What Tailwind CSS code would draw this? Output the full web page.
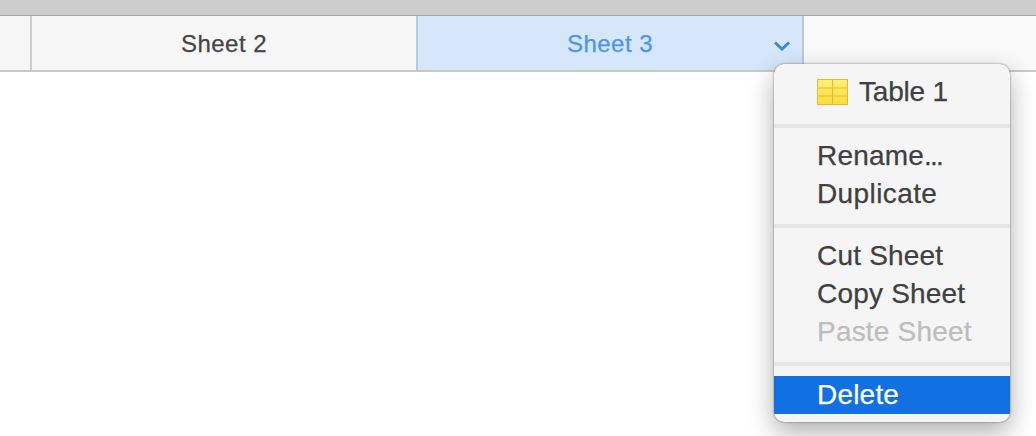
<!DOCTYPE html>
<html lang="en">
<head>
    <meta charset="UTF-8">
    <title>Sheet Menu</title>
    <script src="https://cdn.jsdelivr.net/npm/@tailwindcss/browser@4"></script>
</head>
<body class="bg-white overflow-hidden font-['Liberation_Sans',sans-serif] [-webkit-text-stroke:0.25px]">
    <div class="relative w-[1036px] h-[436px] overflow-hidden">
        <!-- window title strip -->
        <div class="h-[16px] bg-[#cecdcd] border-b border-[#a8a8a8]"></div>

        <!-- sheet tabs -->
        <div class="flex h-[56px] bg-[#f9f9f9] border-b-2 border-[#c9c9c9]">
            <div class="w-[32px] bg-[#f6f6f6] border-r-2 border-[#cdcdcd]"></div>
            <div class="w-[386px] pt-[2px] flex items-center justify-center bg-[#f6f6f6] border-r-2 border-[#b9c9de] text-[24px] tracking-[0.5px] text-[#444444]">Sheet 2</div>
            <div class="relative w-[386px] pt-[2px] flex items-center justify-center bg-[#d6e7fb] border-r-2 border-[#b9c9de] text-[24px] tracking-[0.5px] text-[#4a96ee]">
                Sheet 3
                <svg class="absolute left-[355px] top-[24px]" width="18" height="11" viewBox="0 0 18 11" fill="none" stroke="#3f86d8" stroke-width="3">
                    <path d="M2 2.5l7 6.5 7-6.5"/>
                </svg>
            </div>
        </div>

        <!-- context menu -->
        <div class="absolute left-[774px] top-[64px] w-[236px] h-[358px] pt-[9px] bg-[#f5f5f5] rounded-[10px] overflow-hidden text-[28px] tracking-[0.2px] text-[#404040] leading-[38px] shadow-[0_0_2px_rgba(0,0,0,0.55)]">
            <div class="h-[38px] flex items-center pl-[43px]">
                <svg class="mr-[11px]" width="31" height="26" viewBox="0 0 31 26">
                    <defs>
                        <linearGradient id="tableFill" x1="0" y1="0" x2="0" y2="1">
                            <stop offset="0" stop-color="#fff176"/>
                            <stop offset="1" stop-color="#ffdb38"/>
                        </linearGradient>
                    </defs>
                    <rect x="0.5" y="0.5" width="30" height="25" fill="url(#tableFill)" stroke="#e0b93c"/>
                    <path d="M15.5 1v24M1 9h29M1 17h29" stroke="#e0b93c" stroke-width="1"/>
                </svg>
                <span class="tracking-[-0.2px]">Table 1</span>
            </div>
            <div class="h-[4px] mt-[13px] bg-[#e6e6e6]"></div>
            <div class="h-[38px] mt-[9px] pl-[43px]">Rename<span class="tracking-[-1.8px]">...</span></div>
            <div class="h-[38px] pl-[43px] tracking-[0.4px]">Duplicate</div>
            <div class="h-[4px] mt-[11px] bg-[#e6e6e6]"></div>
            <div class="h-[38px] mt-[9px] pl-[43px]">Cut Sheet</div>
            <div class="h-[38px] pl-[43px]">Copy Sheet</div>
            <div class="h-[38px] pl-[43px] text-[#bdbdbd]">Paste Sheet</div>
            <div class="h-[4px] mt-[11px] bg-[#e6e6e6]"></div>
            <div class="h-[38px] mt-[10px] pl-[43px] bg-[#1271e2] text-white">Delete</div>
        </div>
        <!-- soft drop shadow sits under the menu -->
        <div class="absolute left-[774px] top-[64px] w-[236px] h-[358px] rounded-[10px] shadow-[0_10px_26px_rgba(0,0,0,0.32)]"></div>
    </div>
</body>
</html>
